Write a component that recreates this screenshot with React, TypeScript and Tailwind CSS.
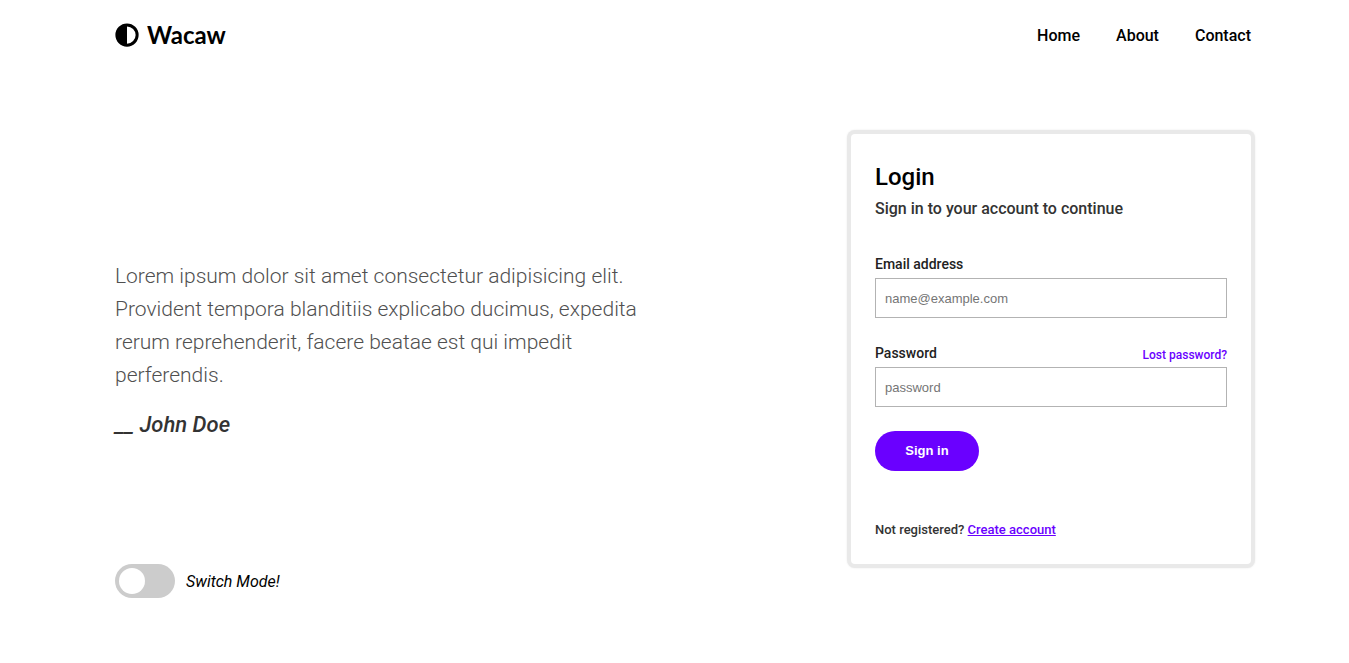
const navLinks = ['Home', 'About', 'Contact'];

function Logo() {
  return (
    <a href="#" className="flex items-center gap-2 font-['Lato',sans-serif] text-2xl font-bold text-black">
      <svg viewBox="0 0 512 512" className="size-6" fill="currentColor" aria-hidden="true">
        <path d="M8 256a248 248 0 1 0 496 0a248 248 0 1 0-496 0m248 184V72a184 184 0 0 1 0 368" />
      </svg>
      Wacaw
    </a>
  );
}

function LoginCard() {
  return (
    <form
      className="w-[400px] rounded-sm bg-white p-6 shadow-[0_0_0_4px_#e9e9e9,0_0_2px_4px_#e9e9e9]"
      onSubmit={(event) => event.preventDefault()}
    >
      <h2 className="text-2xl leading-[38px] font-medium text-black">Login</h2>
      <p className="text-base leading-[26px] font-medium text-[#333]">Sign in to your account to continue</p>

      <label htmlFor="email" className="mt-8 block text-sm leading-5 font-medium text-[#222]">
        Email address
      </label>
      <input
        id="email"
        type="email"
        placeholder="name@example.com"
        className="mt-1 block h-10 w-full border border-[#b3b3b3] px-[9px] font-['Liberation_Sans',sans-serif] text-[13px] placeholder:text-[#757575]"
      />

      <div className="mt-[25px] flex items-end justify-between">
        <label htmlFor="password" className="text-sm leading-5 font-medium text-[#222]">
          Password
        </label>
        <a href="#" className="text-xs leading-4 font-medium text-[#6a00ff]">
          Lost password?
        </a>
      </div>
      <input
        id="password"
        type="password"
        placeholder="password"
        className="mt-1 block h-10 w-full border border-[#b3b3b3] px-[9px] font-['Liberation_Sans',sans-serif] text-[13px] placeholder:text-[#757575]"
      />

      <button
        type="submit"
        className="mt-6 block h-10 w-[104px] rounded-full bg-[#6a00ff] font-['Liberation_Sans',sans-serif] text-[13px] font-bold text-white"
      >
        Sign in
      </button>

      <p className="mt-[49px] text-[13px] leading-5 font-medium text-[#333]">
        Not registered?{' '}
        <a href="#" className="text-[#6a00ff] underline">
          Create account
        </a>
      </p>
    </form>
  );
}

export default function App() {
  return (
    <div className="min-h-screen bg-white pr-[98px] pl-[115px] font-['Roboto',sans-serif]">
      <header className="flex h-[70px] items-center justify-between">
        <Logo />
        <nav className="flex gap-9 pt-0.5">
          {navLinks.map((name) => (
            <a key={name} href="#" className="text-base font-medium text-black">
              {name}
            </a>
          ))}
        </nav>
      </header>

      <main className="mt-16 flex items-center justify-between">
        <div className="w-1/2 pt-0.5">
          <p className="text-[21px] leading-[33px] font-light text-[#505050]">
            Lorem ipsum dolor sit amet consectetur adipisicing elit. Provident tempora blanditiis explicabo ducimus,
            expedita rerum reprehenderit, facere beatae est qui impedit perferendis.
          </p>
          <p className="mt-4 text-[22px] leading-[33px] font-medium text-[#333] italic">__ John Doe</p>
        </div>
        <LoginCard />
      </main>

      <label className="flex w-fit cursor-pointer items-center gap-[11px]">
        <input type="checkbox" className="peer sr-only" />
        <span className="flex h-[34px] w-[60px] items-center rounded-full bg-[#ccc] p-1 peer-checked:justify-end peer-checked:bg-[#6a00ff]">
          <span className="size-[26px] rounded-full bg-white" />
        </span>
        <span className="pt-0.5 text-base text-black italic">Switch Mode!</span>
      </label>
    </div>
  );
}
